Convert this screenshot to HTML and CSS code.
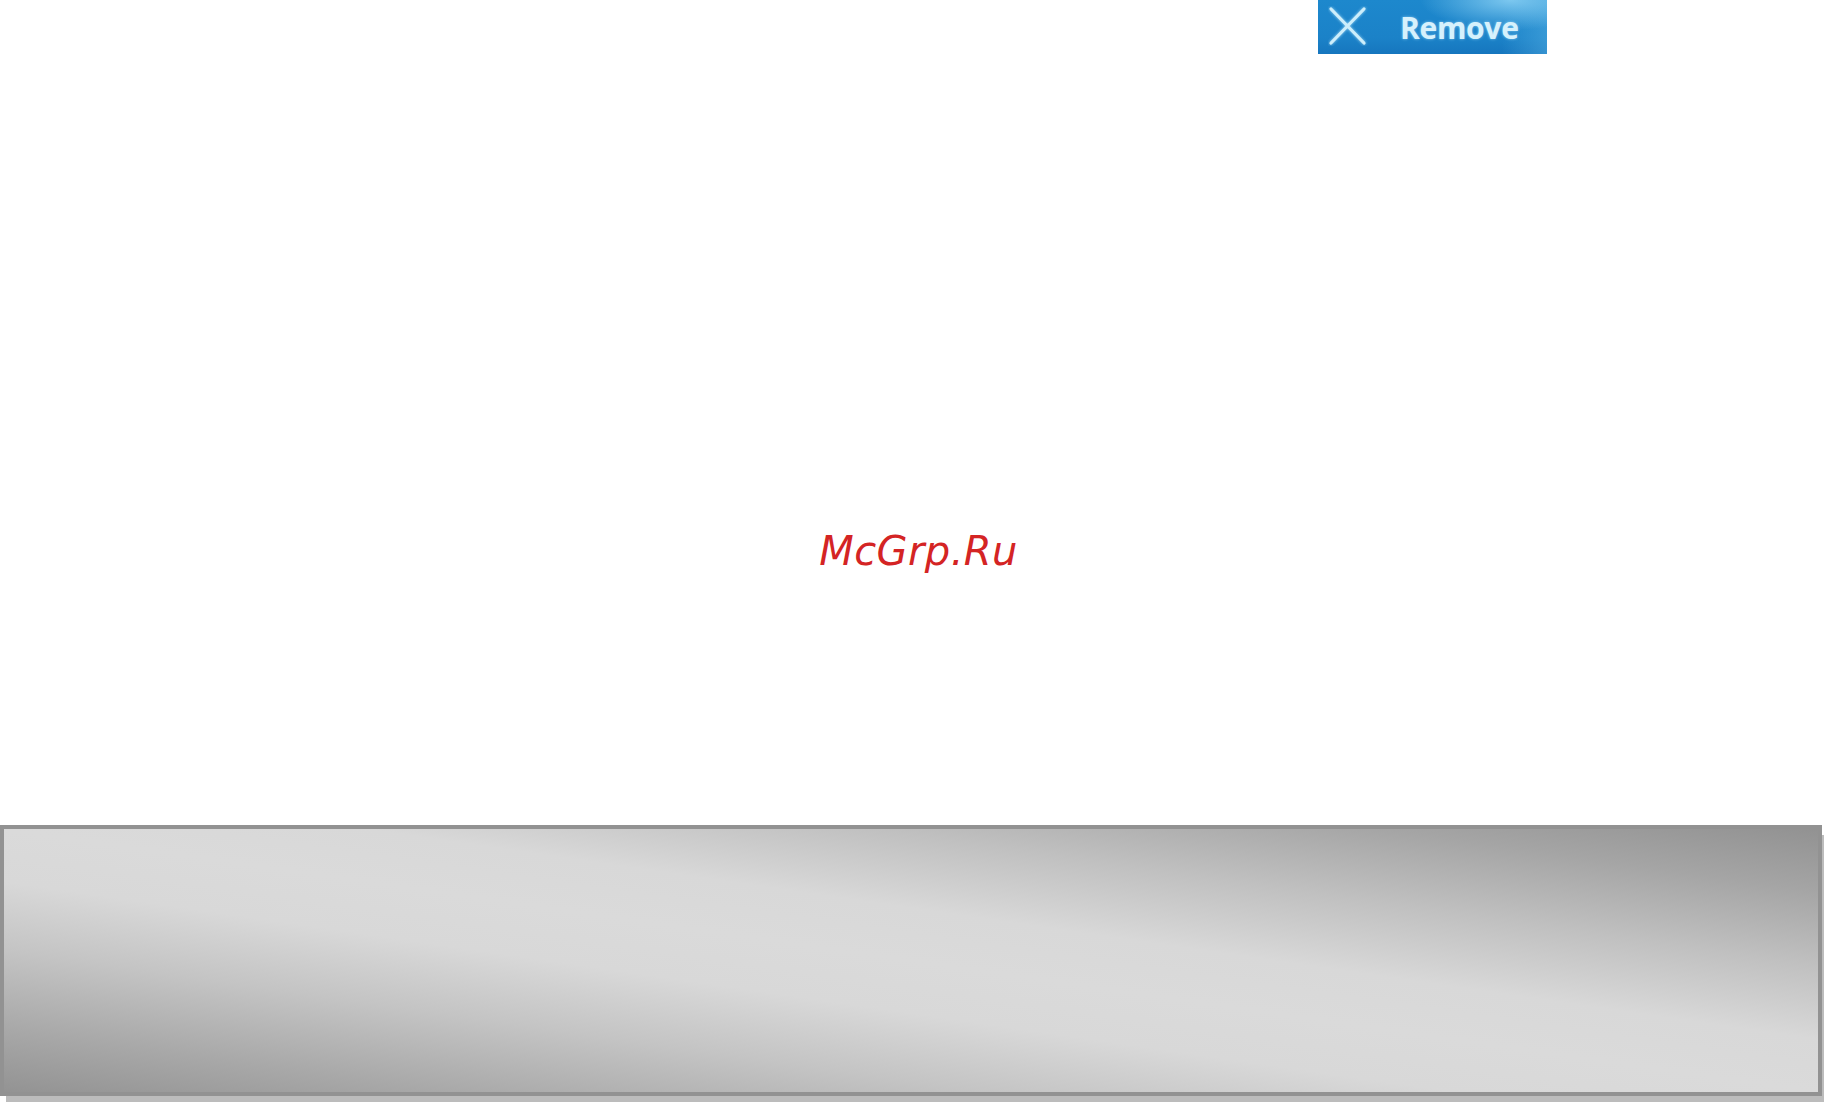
FILE: index.html
```html
<!DOCTYPE html>
<html lang="en">
<head>
<meta charset="UTF-8" />
<title>McGrp.Ru</title>
<link rel="stylesheet" href="styles.css">
</head>
<body>
  <div class="page">
    <div class="topbar">
      <button class="remove-btn" type="button">
        <svg class="remove-icon" width="40" height="40" viewBox="0 0 40 40" aria-hidden="true">
          <path d="M3 3 L36 37 M36 3 L3 37" />
        </svg>
        <span class="remove-label">Remove</span>
      </button>
    </div>

    <div class="watermark">McGrp.Ru</div>

    <div class="footer-panel"></div>
  </div>
</body>
</html>
```

FILE: styles.css
```css
* {
  box-sizing: border-box;
}

html, body {
  margin: 0;
  background: #fff;
}

.page {
  width: 1824px;
  height: 1102px;
  display: flex;
  flex-direction: column;
  overflow: hidden;
}

/* Top button row */
.topbar {
  height: 54px;
  padding-left: 1318px;
  display: flex;
}

.remove-btn {
  width: 229px;
  height: 54px;
  border: none;
  padding: 0 0 0 10px;
  display: flex;
  align-items: center;
  cursor: pointer;
  background:
    radial-gradient(ellipse 90px 30px at 84% 0%, rgba(140, 210, 245, 0.85), rgba(140, 210, 245, 0) 100%),
    linear-gradient(to right, rgba(0, 0, 0, 0) 80%, rgba(90, 180, 230, 0.45) 100%),
    linear-gradient(to bottom, #1d88cd 0%, #1b82c8 70%, #1676be 100%);
}

.remove-icon {
  flex: none;
  margin-bottom: 2px;
}

.remove-icon path {
  stroke: #cdeefb;
  stroke-width: 3.2;
  stroke-linecap: round;
  fill: none;
  filter: drop-shadow(0 0 1.5px rgba(190, 235, 255, 0.8));
}

.remove-label {
  margin-left: 32px;
  margin-top: 1px;
  font-family: "Open Sans", "Noto Sans", sans-serif;
  font-weight: 700;
  font-size: 30px;
  letter-spacing: -0.3px;
  color: #d6f1fc;
  text-shadow: 0 0 3px rgba(170, 225, 255, 0.7);
}

/* Centered watermark */
.watermark {
  margin-top: 477px;
  text-align: center;
  padding-left: 13px;
  font-family: "DejaVu Sans", sans-serif;
  font-style: oblique;
  font-size: 40px;
  line-height: 40px;
  letter-spacing: 0.4px;
  color: #d42424;
}

/* Gray bottom panel */
.footer-panel {
  margin-top: auto;
  margin-bottom: 6px;
  width: 1822px;
  height: 271px;
  border: 4px solid #929292;
  box-shadow: 6px 10px 0 #bcbcbc;
  background: linear-gradient(to top right,
    #939393 0%,
    #a8a8a8 12%,
    #c4c4c4 27%,
    #d8d8d8 40%,
    #dadada 50%,
    #d8d8d8 60%,
    #c0c0c0 74%,
    #a5a5a5 88%,
    #929292 100%);
}
```
